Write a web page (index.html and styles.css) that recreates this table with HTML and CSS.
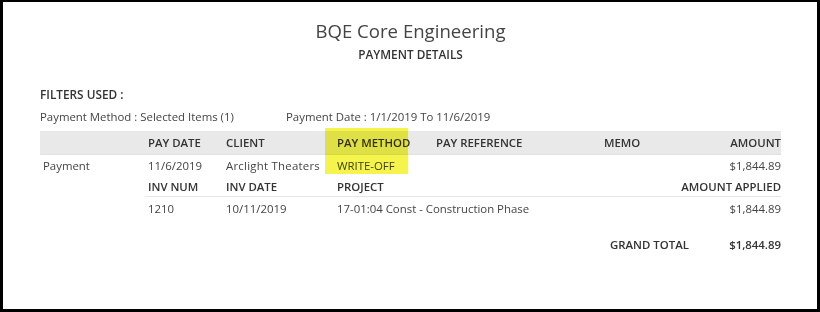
FILE: index.html
```html
<!DOCTYPE html>
<html>
<head>
<meta charset="utf-8">
<link rel="stylesheet" href="styles.css">
</head>
<body>
<div class="frame">
  <div class="title">BQE Core Engineering</div>
  <div class="subtitle">PAYMENT DETAILS</div>
  <div class="filters-head">FILTERS USED :</div>
  <div class="filters">
    <span class="f1">Payment Method : Selected Items (1)</span>
    <span>Payment Date : 1/1/2019 To 11/6/2019</span>
  </div>
  <div class="report">
    <div class="grid">
      <div class="hd"></div>
      <div class="hd">PAY DATE</div>
      <div class="hd">CLIENT</div>
      <div class="hd">PAY METHOD</div>
      <div class="hd">PAY REFERENCE</div>
      <div class="hd">MEMO</div>
      <div class="hd r">AMOUNT</div>

      <div class="c1 pay">Payment</div>
      <div class="c1">11/6/2019</div>
      <div class="c1 client">Arclight Theaters</div>
      <div class="c1">WRITE-OFF</div>
      <div class="c1"></div>
      <div class="c1"></div>
      <div class="c1 r">$1,844.89</div>

      <div class="c2"></div>
      <div class="c2 sh first">INV NUM</div>
      <div class="c2 sh">INV DATE</div>
      <div class="c2 sh span2">PROJECT</div>
      <div class="c2 sh span2 r">AMOUNT APPLIED</div>

      <div class="c3"></div>
      <div class="c3">1210</div>
      <div class="c3">10/11/2019</div>
      <div class="c3 span3">17-01:04 Const - Construction Phase</div>
      <div class="c3 r">$1,844.89</div>
    </div>
    <div class="mark"></div>
  </div>
  <div class="total">
    <span class="tl">GRAND TOTAL</span>
    <span class="tv">$1,844.89</span>
  </div>
</div>
</body>
</html>
```
FILE: styles.css
```css
html, body {
  margin: 0;
  padding: 0;
  background: #ffffff;
}
.frame {
  width: 820px;
  height: 312px;
  box-sizing: border-box;
  border-style: solid;
  border-color: #000;
  border-width: 2px 3px 3px 3px;
  padding: 16px 0 0 37px;
  font-family: "Open Sans", "Noto Sans", sans-serif;
  color: #3a3a3a;
  overflow: hidden;
}
.title {
  width: 741px;
  text-align: center;
  font-size: 18.6px;
  line-height: 26px;
  color: #444;
}
.subtitle {
  width: 741px;
  text-align: center;
  font-size: 11.8px;
  font-weight: 600;
  line-height: 16px;
  margin-top: 2px;
  color: #333;
}
.filters-head {
  margin-top: 24px;
  font-size: 11.8px;
  font-weight: 600;
  line-height: 16px;
  color: #333;
}
.filters {
  margin-top: 7px;
  font-size: 11.4px;
  line-height: 16px;
  display: flex;
  color: #444;
}
.f1 {
  width: 246px;
}
.report {
  position: relative;
  margin-top: 6px;
  width: 741px;
}
.grid {
  display: grid;
  grid-template-columns: 108px 78px 111px 99px 168px 100px 77px;
  font-size: 11.4px;
}
.hd {
  background: #e9e9e9;
  height: 24px;
  line-height: 24px;
  font-weight: 600;
  color: #333;
  border-bottom: 1px solid #dfe0e8;
  box-sizing: border-box;
  white-space: nowrap;
}
.c1 {
  height: 22px;
  line-height: 22px;
  color: #444;
  white-space: nowrap;
}
.client {
  letter-spacing: 0.25px;
}
.pay {
  padding-left: 3px;
}
.c2 {
  height: 20px;
  line-height: 19px;
  box-sizing: border-box;
  white-space: nowrap;
}
.c2.sh {
  font-weight: 600;
  color: #333;
  border-bottom: 1px solid #e4e6ee;
}
.c2.first {
  margin-left: -3px;
  padding-left: 3px;
}
.c3 {
  height: 24px;
  line-height: 24px;
  color: #444;
  white-space: nowrap;
}
.span2 {
  grid-column: span 2;
}
.span3 {
  grid-column: span 3;
}
.r {
  text-align: right;
}
.mark {
  position: absolute;
  left: 285px;
  top: -3px;
  width: 83px;
  height: 46px;
  background: #f4f44c;
  mix-blend-mode: multiply;
}
.total {
  margin-top: 16px;
  width: 741px;
  display: flex;
  font-size: 11.4px;
  line-height: 16px;
  color: #333;
}
.tl {
  margin-left: 570px;
  font-weight: 600;
}
.tv {
  margin-left: auto;
  font-weight: 600;
}
```
